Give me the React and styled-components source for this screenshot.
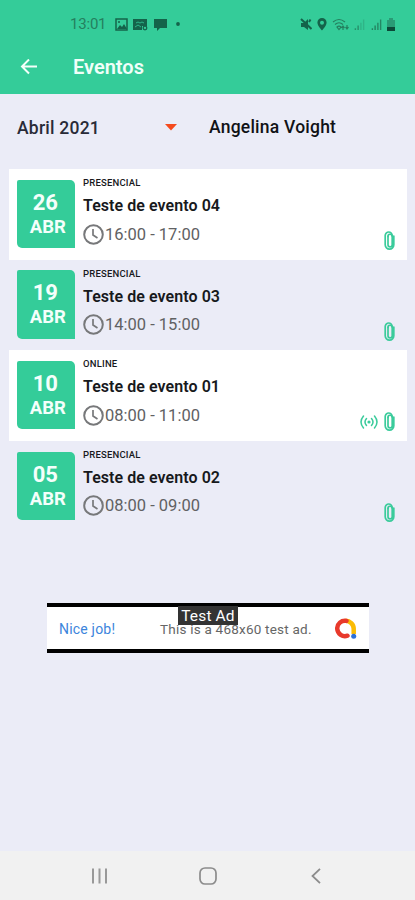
import React from "react";
import styled, { createGlobalStyle } from "styled-components";

const Global = createGlobalStyle`
  * { box-sizing: border-box; }
  body { margin: 0; background: #ebecf7; font-family: Roboto, "Liberation Sans", sans-serif; }
  svg { display: block; flex: none; }
`;

const Screen = styled.div`
  width: 415px;
  height: 900px;
  display: flex;
  flex-direction: column;
  background: #ebecf7;
  overflow: hidden;
  white-space: nowrap;
`;

const Header = styled.header`
  height: 94px;
  flex: none;
  background: #34cc99;
`;

const StatusBar = styled.div`
  height: 48px;
  padding: 0 20px 0 70px;
  display: flex;
  align-items: center;
  justify-content: space-between;
  color: #14634a;
`;

const StatusGroup = styled.div`
  display: flex;
  align-items: center;
  gap: ${(p) => p.$gap}px;
`;

const Clock = styled.span`
  width: 39px;
  font-size: 15px;
  letter-spacing: -0.2px;
  color: #24805f;
`;

const TitleBar = styled.div`
  height: 38px;
  padding-left: 20px;
  display: flex;
  align-items: center;
  gap: 35px;
`;

const Title = styled.h1`
  margin: 0;
  font-size: 20px;
  line-height: 24px;
  font-weight: 600;
  color: #f0fff9;
`;

const Filters = styled.div`
  height: 75px;
  flex: none;
  display: flex;
  padding: 22px 16px 0 17px;
`;

const MonthPicker = styled.div`
  width: 192px;
  height: 24px;
  padding-right: 32.5px;
  display: flex;
  align-items: center;
  justify-content: space-between;
`;

const FilterText = styled.span`
  font-size: 17.5px;
  line-height: 22px;
  font-weight: 500;
  color: ${(p) => p.$color};
  letter-spacing: 0.23px;
`;

const EventList = styled.main`
  margin: 0 8px 0 9px;
`;

const EventRow = styled.article`
  height: 90.6px;
  padding: 8px 12px 9px 8px;
  display: flex;
  background: ${(p) => (p.$shaded ? "transparent" : "#fff")};
`;

const DateTile = styled.div`
  width: 57.5px;
  height: 68.5px;
  margin-top: 2.8px;
  padding: 10px 0 0 4px;
  flex: none;
  border-radius: 2px 5px 0 5px;
  background: #34cc99;
  color: #f4fffb;
  text-align: center;
  font-weight: 700;
`;

const Day = styled.div`
  margin-left: -5px;
  font-size: 22px;
  line-height: 25px;
`;

const Month = styled.div`
  font-size: 18.5px;
  line-height: 25.6px;
`;

const Details = styled.div`
  flex: 1;
  padding-left: 8.5px;
`;

const Mode = styled.div`
  font-size: 9.5px;
  line-height: 12px;
  font-weight: 500;
  letter-spacing: 0.2px;
  color: #17191c;
`;

const EventName = styled.div`
  margin-top: 6px;
  font-size: 16px;
  line-height: 22px;
  font-weight: 600;
  letter-spacing: 0.06px;
  color: #17191c;
`;

const Time = styled.div`
  margin-top: 6px;
  height: 22px;
  display: flex;
  align-items: center;
  gap: 1px;
  font-size: 16.5px;
  color: #606163;
`;

const Badges = styled.div`
  display: flex;
  align-items: center;
  align-self: flex-end;
  gap: 6px;
  height: 20px;
  color: #3acb9b;
`;

const AdSlot = styled.aside`
  width: 322px;
  height: 50px;
  margin: 71.6px 0 0 47px;
  position: relative;
  display: flex;
  align-items: center;
  padding: 2px 12px 0;
  flex: none;
  background: #fff;
  border-top: 4px solid #000;
  border-bottom: 4px solid #000;
`;

const AdPraise = styled.span`
  width: 101px;
  font-size: 14px;
  letter-spacing: 0.2px;
  color: #3c85dc;
`;

const AdCopy = styled.span`
  flex: 1;
  font-size: 13.5px;
  letter-spacing: 0.22px;
  color: #666;
`;

const AdLabel = styled.span`
  position: absolute;
  left: 131px;
  top: -1px;
  width: 60px;
  height: 19px;
  background: #333;
  color: #fff;
  font-size: 15.5px;
  line-height: 20px;
  letter-spacing: 0.15px;
  text-align: center;
`;

const NavBar = styled.nav`
  height: 49px;
  margin-top: auto;
  padding: 0 94px 0 91px;
  flex: none;
  display: grid;
  grid-template-columns: 17px 18px 10px;
  justify-content: space-between;
  align-items: center;
  background: #f1f1f1;
`;

const HomeSlot = styled.div`
  margin-left: -2px;
`;

const PictureIcon = () => (
  <svg width="13" height="13" viewBox="0 0 13 13" fill="none" stroke="currentColor" strokeWidth="1.5">
    <rect x="1" y="1" width="11" height="11" />
    <path d="M2 11l3-4 2 2 2-3 3 5z" fill="currentColor" stroke="none" />
    <circle cx="4" cy="4" r="1" fill="currentColor" stroke="none" />
  </svg>
);
const MediaIcon = () => (
  <svg width="15" height="13" viewBox="0 0 15 13">
    <path d="M0 1h14v7H9v4H0z" fill="currentColor" />
    <path d="M3 5l2-1 2 1 2-1 2 1M2 9l3-2 3 2" fill="none" stroke="#34cc99" strokeWidth="0.8" />
    <circle cx="12" cy="10" r="1.8" fill="none" stroke="currentColor" strokeWidth="1.3" />
  </svg>
);
const ChatIcon = () => (
  <svg width="13" height="13" viewBox="0 0 13 13"><path d="M0 1h13v9H6l-3 3v-3H0z" fill="currentColor" /></svg>
);
const DotIcon = () => (
  <svg width="9" height="4" viewBox="0 0 9 4"><circle cx="6" cy="2" r="1.9" fill="currentColor" /></svg>
);
const MuteIcon = () => (
  <svg width="12" height="13" viewBox="0 0 12 13">
    <path d="M1 5h3l4-4v11L4 9H1z" fill="currentColor" />
    <path d="M1 1l10.5 10M10.500 1.500L9 4" fill="none" stroke="currentColor" strokeWidth="2" />
  </svg>
);
const PinIcon = () => (
  <svg width="10" height="13" viewBox="0 0 10 13">
    <path fillRule="evenodd" d="M5 0a4.600 4.600 0 0 0-4.600 4.600C.4 8 5 12.500 5 12.500s4.600-4.500 4.600-7.900A4.600 4.600 0 0 0 5 0zm0 2.700a2 2 0 1 1 0 4 2 2 0 0 1 0-4z" fill="currentColor" />
  </svg>
);
const WifiIcon = () => (
  <svg width="17" height="13" viewBox="0 0 17 13" fill="none" stroke="#24805f" strokeWidth="1.2">
    <path d="M1 4q6-5 12 0M3 6.500q4-3.500 8 0M5 9q2-1.800 4 0L7 11.500zM11 8v4M9.500 10L11 8l1.500 2M15 11V7M13.500 9l1.500 2 1.500-2" />
  </svg>
);
const SignalIcon = ({ faint }) => (
  <svg width="11" height="13" viewBox="0 0 12 13" stroke="#24805f" strokeWidth="1.5">
    <path d="M1.500 12.500v-2M4.500 12.500v-5" opacity={faint ? 0.8 : 1} />
    <path d="M7.500 12.500V4.500M10.500 12.500V1" opacity={faint ? 0.3 : 0.9} />
  </svg>
);
const BatteryIcon = () => (
  <svg width="8" height="13" viewBox="0 0 8 13">
    <path d="M0 2h2V0h4v2h2v7H0z" fill="#2a9b76" /><path d="M0 9h8v4H0z" fill="#0c4938" />
  </svg>
);
const BackArrow = () => (
  <svg width="18" height="17" viewBox="0 0 18 17" fill="none" stroke="#f4fffa" strokeWidth="2">
    <path d="M17 7.500H2M9 0.500L2 7.500 9 14.500" />
  </svg>
);
const CaretIcon = () => (
  <svg width="12" height="9" viewBox="0 0 12 9"><path d="M0 0h12L6 6.500z" fill="#f54a1d" /></svg>
);
const ClockIcon = () => (
  <svg width="21" height="21" viewBox="0 0 21 21" fill="none" stroke="#77787a">
    <circle cx="10.5" cy="10.5" r="9.3" strokeWidth="2" />
    <path d="M10 5v6l4.500 3" strokeWidth="1.7" />
  </svg>
);
const ClipIcon = () => (
  <svg width="11" height="19" viewBox="0 0 11 19" fill="none" stroke="currentColor" strokeWidth="1.7" strokeLinecap="round">
    <path d="M9.800 5v8.800a4.300 4.300 0 0 1-8.600 0V4.500a3.500 3.500 0 0 1 7 0v9.200a2.100 2.100 0 0 1-4.200 0V5.500" />
    <path d="M8 5a2 2 0 0 0-4 .5" />
  </svg>
);
const LiveIcon = () => (
  <svg width="18" height="14" viewBox="0 0 18 14" fill="none" stroke="currentColor" strokeWidth="1.5" strokeLinecap="round">
    <path d="M3.500 1Q-1.500 7 3.500 13M6.500 3.500Q3.500 7 6.500 10.500M14.500 1q5 6 0 12M11.500 3.500q3 3.500 0 7" />
    <circle cx="9" cy="7" r="1.6" fill="currentColor" stroke="none" />
  </svg>
);
const AdMobIcon = () => (
  <svg width="22" height="21" viewBox="0 0 22 21" fill="none" strokeWidth="4.5">
    <path d="M10.500 2.800a8 8 0 0 1 8.200 8V16" stroke="#fbbc04" />
    <path d="M11.500 2.900A7.700 7.700 0 1 0 12.500 17.700" stroke="#e8392b" strokeLinecap="round" />
    <circle cx="18.7" cy="18.3" r="2.5" fill="#2d70d8" stroke="none" />
  </svg>
);
const RecentsIcon = () => (
  <svg width="17" height="16" viewBox="0 0 17 16" stroke="#999" strokeWidth="2">
    <path d="M2 0.500v15M8.500 0.500v15M15 0.500v15" />
  </svg>
);
const HomeIcon = () => (
  <svg width="18" height="18" viewBox="0 0 18 18" fill="none" stroke="#8c8c8c" strokeWidth="1.7">
    <rect x="1" y="1" width="16" height="16" rx="5" />
  </svg>
);
const BackIcon = () => (
  <svg width="10" height="16" viewBox="0 0 10 16" fill="none" stroke="#8c8c8c" strokeWidth="1.8">
    <path d="M9 0.800L1.500 8 9 15.200" />
  </svg>
);

const events = [
  { day: "26", mode: "PRESENCIAL", name: "Teste de evento 04", time: "16:00 - 17:00" },
  { day: "19", mode: "PRESENCIAL", name: "Teste de evento 03", time: "14:00 - 15:00" },
  { day: "10", mode: "ONLINE", name: "Teste de evento 01", time: "08:00 - 11:00", live: true },
  { day: "05", mode: "PRESENCIAL", name: "Teste de evento 02", time: "08:00 - 09:00" },
];

export default function App() {
  return (
    <Screen>
      <Global />
      <Header>
        <StatusBar>
          <StatusGroup $gap={5.5}>
            <Clock>13:01</Clock>
            <PictureIcon />
            <MediaIcon />
            <ChatIcon />
            <DotIcon />
          </StatusGroup>
          <StatusGroup $gap={5.3}>
            <MuteIcon />
            <PinIcon />
            <WifiIcon />
            <SignalIcon faint />
            <SignalIcon />
            <BatteryIcon />
          </StatusGroup>
        </StatusBar>
        <TitleBar>
          <BackArrow />
          <Title>Eventos</Title>
        </TitleBar>
      </Header>
      <Filters>
        <MonthPicker>
          <FilterText $color="#292b38">Abril 2021</FilterText>
          <CaretIcon />
        </MonthPicker>
        <FilterText $color="#111216">Angelina Voight</FilterText>
      </Filters>
      <EventList>
        {events.map((event, index) => (
          <EventRow key={event.day} $shaded={index % 2 === 1}>
            <DateTile>
              <Day>{event.day}</Day>
              <Month>ABR</Month>
            </DateTile>
            <Details>
              <Mode>{event.mode}</Mode>
              <EventName>{event.name}</EventName>
              <Time><ClockIcon />{event.time}</Time>
            </Details>
            <Badges>
              {event.live && <LiveIcon />}
              <ClipIcon />
            </Badges>
          </EventRow>
        ))}
      </EventList>
      <AdSlot>
        <AdPraise>Nice job!</AdPraise>
        <AdCopy>This is a 468x60 test ad.</AdCopy>
        <AdMobIcon />
        <AdLabel>Test Ad</AdLabel>
      </AdSlot>
      <NavBar>
        <RecentsIcon />
        <HomeSlot><HomeIcon /></HomeSlot>
        <BackIcon />
      </NavBar>
    </Screen>
  );
}
